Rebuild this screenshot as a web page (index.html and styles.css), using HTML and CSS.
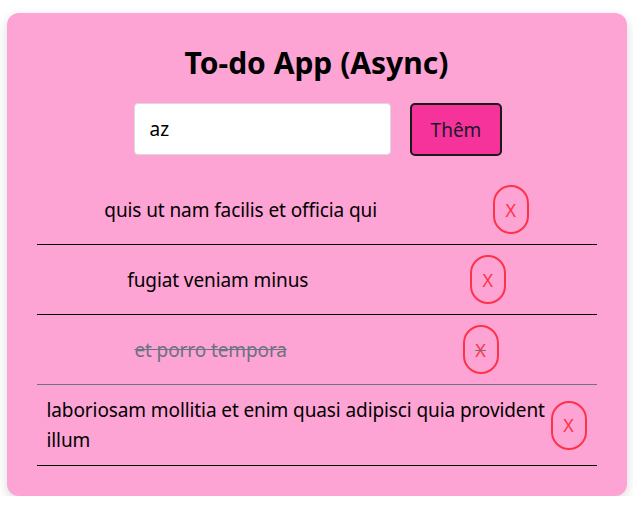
FILE: index.html
```html
<!DOCTYPE html>
<html lang="vi">
<head>
<meta charset="utf-8">
<title>To-do App (Async)</title>
<link rel="stylesheet" href="styles.css">
</head>
<body>
<div class="card">
  <h1 class="title">To-do App (Async)</h1>
  <form class="add-form">
    <input class="add-input" type="text" value="az">
    <button class="add-btn" type="button">Thêm</button>
  </form>
  <ul class="todo-list">
    <li class="todo-item"><span class="todo-text">quis ut nam facilis et officia qui</span><button class="del-btn" type="button">X</button></li>
    <li class="todo-item"><span class="todo-text">fugiat veniam minus</span><button class="del-btn" type="button">X</button></li>
    <li class="todo-item done"><span class="todo-text">et porro tempora</span><button class="del-btn" type="button">X</button></li>
    <li class="todo-item"><span class="todo-text">laboriosam mollitia et enim quasi adipisci quia provident illum</span><button class="del-btn" type="button">X</button></li>
  </ul>
</div>
</body>
</html>
```

FILE: styles.css
```css
* { box-sizing: border-box; }

body {
  margin: 0;
  background: #ffffff;
  font-family: "Noto Sans", "Open Sans", sans-serif;
  font-size: 19px;
  line-height: 30px;
  color: #000;
}

.card {
  width: 620px;
  margin: 13px auto 0;
  background: #fda4d5;
  border-radius: 12px;
  box-shadow: 0 4px 12px rgba(0, 0, 0, 0.15);
  padding: 30px 30px 30px;
}

.title {
  margin: 0 0 20px;
  text-align: center;
  font-size: 30px;
  line-height: 40px;
  font-weight: 700;
}

.add-form {
  display: flex;
  justify-content: center;
  gap: 19px;
  margin: 0 0 20px;
  padding-left: 3px;
}

.add-input {
  width: 257px;
  height: 52px;
  padding: 10px 15px;
  border: 1px solid #d9d9de;
  border-radius: 4px;
  background: #fff;
  font: inherit;
  color: #000;
  outline: none;
}

.add-btn {
  height: 53px;
  padding: 0 19px;
  border: 2px solid #1a1a1a;
  border-radius: 5px;
  background: #f6339a;
  font: inherit;
  color: #1a1a2a;
}

.todo-list {
  list-style: none;
  margin: -1px 0 0;
  padding: 0;
}

.todo-item {
  display: flex;
  justify-content: space-around;
  align-items: center;
  padding: 10px;
  border-bottom: 1px solid;
}

.todo-text {
  letter-spacing: -0.1px;
}

.todo-item.done {
  color: #6b7280;
  text-decoration: line-through;
}

.del-btn {
  flex: none;
  width: 36px;
  height: 49px;
  padding: 0;
  border: 2px solid #ff3347;
  border-radius: 18px;
  background: transparent;
  color: #ff3347;
  font: inherit;
  font-size: 18px;
}
```
